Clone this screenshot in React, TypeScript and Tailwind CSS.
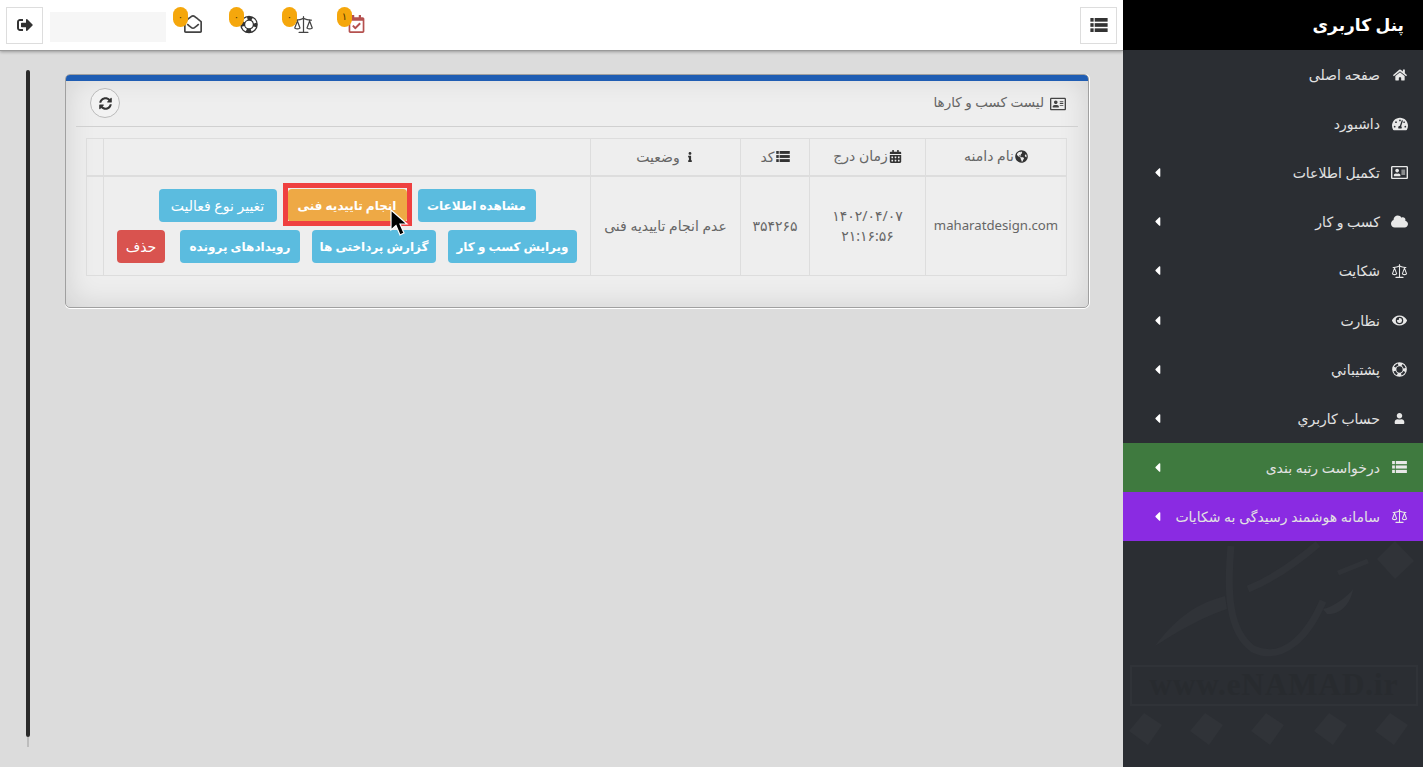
import React from "react";
import { FaSignOutAlt, FaRegEnvelopeOpen, FaRegCalendarCheck, FaSyncAlt, FaRegAddressCard, FaGlobeAmericas, FaCalendarAlt, FaInfo, FaHome, FaTachometerAlt, FaCloud, FaEye, FaUser, FaCaretLeft } from "react-icons/fa";
import { Scale } from "lucide-react";

const font = "font-['Noto_Sans','DejaVu_Sans',sans-serif]";

function ThList({ w, h }: { w: number; h: number }) {
  return (
    <svg width={w} height={h} viewBox="0 0 16 13" fill="currentColor">
      <rect x="0" y="0" width="3" height="3.4" />
      <rect x="4" y="0" width="12" height="3.4" />
      <rect x="0" y="4.8" width="3" height="3.4" />
      <rect x="4" y="4.8" width="12" height="3.4" />
      <rect x="0" y="9.6" width="3" height="3.4" />
      <rect x="4" y="9.6" width="12" height="3.4" />
    </svg>
  );
}

function LifeRing({ size, gap }: { size: number; gap: string }) {
  return (
    <svg width={size} height={size} viewBox="0 0 20 20" fill="none">
      <circle cx="10" cy="10" r="7" stroke="currentColor" strokeWidth="5.6" />
      <circle cx="10" cy="10" r="7" stroke={gap} strokeWidth="2.8" strokeDasharray="5.5 5.5" strokeDashoffset="-2.75" />
    </svg>
  );
}

function Badge({ n }: { n: string }) {
  return <span className="absolute left-[-11px] top-[-8px] w-[15px] h-[20px] rounded-full bg-[#f5a70c] text-[#4a3400] text-[10px] leading-[18px] text-center">{n}</span>;
}

function TopIcon({ n, children, cls }: { n: string; children: React.ReactNode; cls: string }) {
  return <div className={`relative flex items-center justify-center h-[18px] ${cls}`}><Badge n={n} />{children}</div>;
}

function Btn({ w, color, bold = true, children }: { w: string; color: string; bold?: boolean; children: React.ReactNode }) {
  return <button className={`${w} ${color} h-[33px] rounded-[4px] text-white whitespace-nowrap ${bold ? "font-bold text-[12px]" : "font-normal text-[14px]"} flex items-center justify-center`}>{children}</button>;
}

const items: { t: string; icon: React.ReactNode; caret: boolean; bg?: string }[] = [
  { t: "صفحه اصلی", icon: <FaHome size={14} />, caret: false },
  { t: "داشبورد", icon: <FaTachometerAlt size={16} />, caret: false },
  { t: "تکمیل اطلاعات", icon: <FaRegAddressCard size={17} />, caret: true },
  { t: "کسب و کار", icon: <FaCloud size={17} />, caret: true },
  { t: "شکایت", icon: <Scale size={18} strokeWidth={1.5} />, caret: true },
  { t: "نظارت", icon: <FaEye size={15} />, caret: true },
  { t: "پشتيباني", icon: <LifeRing size={15} gap="#2b2e33" />, caret: true },
  { t: "حساب کاربري", icon: <FaUser size={11} />, caret: true },
  { t: "درخواست رتبه بندی", icon: <ThList w={15} h={12} />, caret: true, bg: "bg-[#3f7a3f]" },
  { t: "سامانه هوشمند رسیدگی به شکایات", icon: <Scale size={18} strokeWidth={1.5} />, caret: true, bg: "bg-[#8a2be2]" },
];

function Watermark() {
  const xs = [23, 84, 145, 208, 269];
  return (
    <div className="absolute left-0 right-0 bottom-0 h-[226px] pointer-events-none">
      <svg width="300" height="226" className="absolute left-0 top-0" viewBox="0 0 300 226" fill="none">
        <path d="M32 105 C55 75 75 62 102 55 L104 68 C80 76 55 90 32 105Z" fill="#303338" />
        <path d="M108 5 C104 50 105 90 130 108 C160 122 185 95 200 60" stroke="#303338" strokeWidth="7" />
        <path d="M125 48 C150 38 175 20 195 3" stroke="#303338" strokeWidth="7" />
        <path d="M200 68 C212 66 228 52 230 48 C228 62 218 74 204 73Z" fill="#32353a" />
        <path d="M215 32 L245 20" stroke="#303338" strokeWidth="5" />
        <polygon points="272,0 291,20 272,38 254,18" fill="#303338" />
        {xs.map((x) => (
          <polygon key={x} points={`${x - 2},172 ${x + 16},184 ${x + 2},204 ${x - 17},190`} fill="#303338" />
        ))}
      </svg>
      <div className="absolute left-[7px] top-[124px] w-[288px] h-[41px] border-2 border-[#303338] flex items-center justify-center text-[#282b2f] text-[31px] font-bold font-['Liberation_Serif',serif] tracking-[1px] whitespace-nowrap">
        www.eNAMAD.ir
      </div>
    </div>
  );
}

const cell = "border border-[#dddddd]";
const th = "border border-[#dddddd] border-b-2 font-normal leading-[20px]";

export default function App() {
  return (
    <div className={`flex w-[1423px] h-[767px] overflow-hidden bg-[#dcdcdc] ${font}`}>
      <div className="w-[1123px] flex flex-col relative">
        <header className="h-[51px] shrink-0 bg-white border-b border-[#9a9a9a] shadow-[0_1px_3px_rgba(0,0,0,0.3)] flex items-center pl-[6px] pr-[6px] relative z-10">
          <button className="w-[37px] h-[37px] border border-[#dddddd] flex items-center justify-center text-[#333]"><FaSignOutAlt size={16} /></button>
          <div className="ml-[7px] mt-[4px] w-[116px] h-[30px] bg-[#f6f6f6]" />
          <div className="ml-[18px] flex items-center mt-[-2px]">
            <TopIcon n="۰" cls="w-[18px]"><FaRegEnvelopeOpen size={18} className="text-[#444]" /></TopIcon>
            <TopIcon n="۰" cls="w-[18px] ml-[38px] text-[#333]"><LifeRing size={19} gap="#ffffff" /></TopIcon>
            <TopIcon n="۰" cls="w-[21px] ml-[35px]"><Scale size={23} strokeWidth={1.4} className="text-[#444]" /></TopIcon>
            <TopIcon n="۱" cls="w-[17px] ml-[34px]"><FaRegCalendarCheck size={18} className="text-[#b5514f]" /></TopIcon>
          </div>
          <button className="ml-auto w-[37px] h-[37px] border border-[#dddddd] flex items-center justify-center text-[#333]"><ThList w={18} h={14} /></button>
        </header>

        <main className="flex-1 flex items-start pl-[26px]">
          <div className="mt-[19px] shrink-0 flex flex-col items-center">
            <div className="w-[4px] h-[667px] bg-[#2a2a2a] rounded-full" />
            <div className="w-[2px] h-[10px] bg-[#bdbdbd]" />
          </div>
          <section dir="rtl" className="ml-[35px] mt-[23px] w-[1024px] h-[234px] rounded-[5px] border border-[#a0a0a0] bg-[#eeeeee] shadow-[inset_0_0_30px_rgba(0,0,0,0.13),0_1px_0_#ffffff,1px_0_0_#ffffff] overflow-hidden">
            <div className="h-[6px] bg-[#1f5db3]" />
            <div className="mx-[10px] h-[46px] border-b border-[#d0d0d0] flex items-center pr-[12px]">
              <FaRegAddressCard size={16} className="text-[#444] ml-[6px]" />
              <span className="text-[13.5px] text-[#666] mt-[-2px]">لیست کسب و کارها</span>
              <button className="mr-auto ml-[14px] mt-[-1px] w-[30px] h-[30px] rounded-full border border-[#bbbbbb] bg-[#f2f2f2] flex items-center justify-center text-[#333]">
                <FaSyncAlt size={13} />
              </button>
            </div>
            <table className="mt-[11px] mr-[21px] w-[980px] table-fixed border-collapse text-[14px] text-[#666] text-center">
              <colgroup>
                <col className="w-[141px]" />
                <col className="w-[116px]" />
                <col className="w-[69px]" />
                <col className="w-[150px]" />
                <col className="w-[487px]" />
                <col className="w-[17px]" />
              </colgroup>
              <thead>
                <tr className="h-[37px] border-b-2 border-[#dddddd]">
                  <th className={th}><span className="inline-flex items-center gap-[1px]"><FaGlobeAmericas size={13} className="text-[#333]" />نام دامنه</span></th>
                  <th className={th}><span className="inline-flex items-center gap-[1px]"><FaCalendarAlt size={13} className="text-[#333]" />زمان درج</span></th>
                  <th className={th}><span className="inline-flex items-center gap-[1px]"><span className="text-[#333] flex"><ThList w={14} h={11} /></span>کد</span></th>
                  <th className={th}><span className="inline-flex items-center gap-[5px]"><FaInfo size={10} className="text-[#333]" />وضعیت</span></th>
                  <th className={th} />
                  <th className={th} />
                </tr>
              </thead>
              <tbody>
                <tr className="h-[100px]">
                  <td className={`${cell} text-[13.2px]`}>maharatdesign.com</td>
                  <td className={`${cell} leading-[20px]`}><div>۱۴۰۲/۰۴/۰۷</div><div>۲۱:۱۶:۵۶</div></td>
                  <td className={cell}>۳۵۴۲۶۵</td>
                  <td className={`${cell} whitespace-nowrap`}>عدم انجام تاییدیه فنی</td>
                  <td className={cell}>
                    <div className="flex flex-col gap-[8px] mt-[1px]">
                      <div className="flex justify-center gap-[11px]">
                        <Btn w="w-[118px]" color="bg-[#5bbcdf]">مشاهده اطلاعات</Btn>
                        <div className="relative">
                          <Btn w="w-[119px]" color="bg-[#eea945]">انجام تاییدیه فنی</Btn>
                          <div className="absolute left-[-5px] right-[-5px] top-[-6px] bottom-[-4px] border-[5px] border-[#ef4040]" />
                        </div>
                        <Btn w="w-[118px]" color="bg-[#5bbcdf]" bold={false}>تغییر نوع فعالیت</Btn>
                      </div>
                      <div className="flex justify-center gap-[12px]">
                        <Btn w="w-[129px]" color="bg-[#5bbcdf]">ویرایش کسب و کار</Btn>
                        <Btn w="w-[124px]" color="bg-[#5bbcdf]">گزارش پرداختی ها</Btn>
                        <Btn w="w-[120px]" color="bg-[#5bbcdf]">رویدادهای پرونده</Btn>
                        <Btn w="w-[48px] mr-[3px]" color="bg-[#d9534f]" bold={false}>حذف</Btn>
                      </div>
                    </div>
                  </td>
                  <td className={cell} />
                </tr>
              </tbody>
            </table>
          </section>
        </main>

        <svg width="20" height="30" viewBox="0 0 20 30" className="absolute left-[389px] top-[209px] z-20">
          <path d="M2 1 L2 21 L7 16.5 L11 26 L15 24 L11 15 L18 15 Z" fill="#000" stroke="#fff" strokeWidth="1.2" />
        </svg>
      </div>

      <aside dir="rtl" className="w-[300px] shrink-0 bg-[#2b2e33] relative flex flex-col">
        <div className="h-[50px] shrink-0 bg-black text-white text-[17px] font-bold flex items-center pr-[19px]">پنل کاربری</div>
        <Watermark />
        <nav className="relative flex flex-col">
          {items.map((it) => (
            <div key={it.t} className={`h-[49.1px] flex items-center pr-[15px] pl-[27px] text-[#e2e2e2] text-[14px] ${it.bg ?? ""}`}>
              <span className="w-[17px] flex justify-center text-[#e8e8e8]">{it.icon}</span>
              <span className="mr-[11px] whitespace-nowrap">{it.t}</span>
              {it.caret && <FaCaretLeft size={15} className="mr-auto text-white" />}
            </div>
          ))}
        </nav>
      </aside>
    </div>
  );
}
